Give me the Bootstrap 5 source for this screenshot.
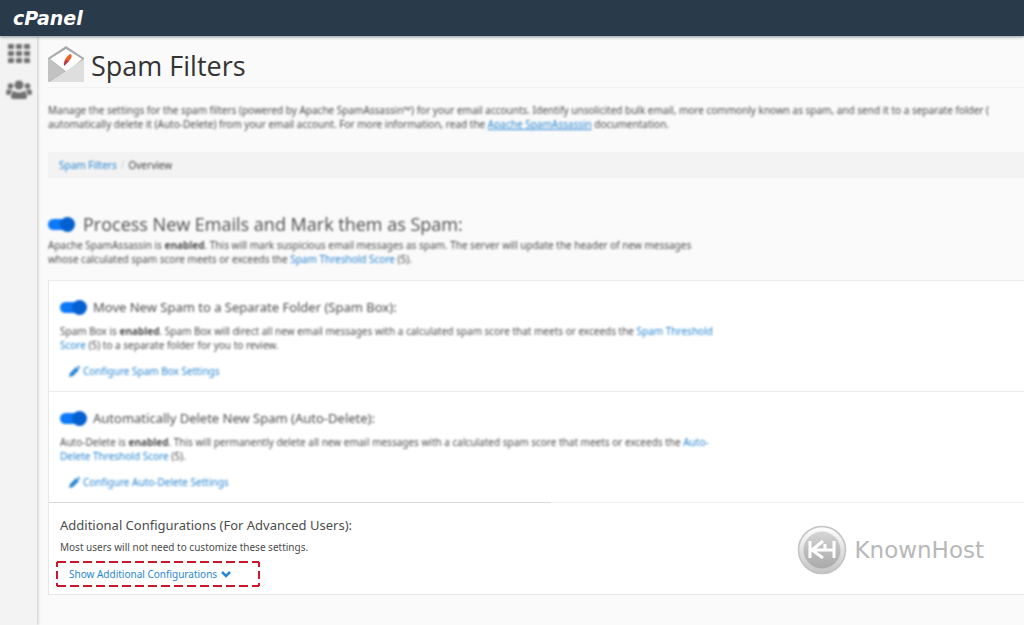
<!DOCTYPE html>
<html lang="en">
<head>
<meta charset="utf-8">
<meta name="viewport" content="width=device-width, initial-scale=1">
<title>cPanel - Spam Filters</title>
<link href="https://cdn.jsdelivr.net/npm/bootstrap@5.3.0/dist/css/bootstrap.min.css" rel="stylesheet">
<style>
  body { font-family: "Noto Sans", "Open Sans", sans-serif; font-size: 10px; line-height: 14px; color: #4c4c4c; background: #fafafa; overflow-x: hidden; }
  a { color: #2a86d1; text-decoration: none; }
  h1, h2, h3 { font-family: "Open Sans", sans-serif; font-weight: 400; margin: 0; }
  .topbar { background: #293a4a; height: 36px; box-shadow: 0 1px 3px #293a4a88; z-index: 2; }
  .brand-word { font: italic bold 19px/24px "DejaVu Sans", sans-serif; color: #fff; margin-left: 13px; }
  .side { width: 37px; flex: none; background: #f3f3f3; box-shadow: 1px 0 3px #0003; padding-top: 7px; gap: 16px; }
  .page { padding: 10px 0 30px 11px; }
  .title-row { gap: 7px; height: 42px; border-bottom: 1px solid #f2f2f2; }
  h1 { font-size: 27px; line-height: 40px; color: #333; }
  .intro { margin: 15px 0 21px; white-space: nowrap; }
  .intro a { text-decoration: underline; }
  .crumbs { --bs-breadcrumb-item-padding-x: 4px; background: #f3f3f3; padding: 6px 11px; margin: 0 0 34px; font-size: 10px; }
  .crumbs .breadcrumb-item + .breadcrumb-item::before { color: #ccc; }
  .crumbs .active { color: #444; }
  h2 { font-size: 18px; line-height: 24px; }
  h3 { font-family: "Noto Sans", sans-serif; font-size: 13px; line-height: 24px; }
  .soft { filter: blur(1px); }
  .toggle { appearance: none; position: relative; width: 27px; height: 15px; margin: 0; flex: none; }
  .toggle::before { content: ""; position: absolute; inset: 2px 2px 2px 0; border-radius: 6px; background: #0d78f8; }
  .toggle::after { content: ""; position: absolute; right: 0; width: 15px; height: 15px; border-radius: 50%; background: #0560cf; }
  .status { margin: 2px 0 14px; }
  .panel-item { border-top: 1px solid #ececec; border-left: 1px solid #e8e8e8; background: #fff; padding: 14px 11px 11px; }
  .panel-item h3, .panel-item .head { height: 24px; }
  .head { gap: 6px; }
  .panel-item p { margin: 5px 0 10px; }
  .act { height: 18px; margin-left: 9px; gap: 3px; }
  .advanced { border-top: 0; border-bottom: 1px solid #e6e6e6; padding: 11px 40px 7px 11px; background: linear-gradient(90deg, #d9d9d9 502px, #f0f0f0 502px) 0 0 / 100% 1px no-repeat #fff; }
  .advanced p { margin: 3px 0 7px; }
  .callout { position: relative; width: 204px; height: 26px; margin-left: -4px; padding-left: 13px; }
  .callout .dashes { position: absolute; inset: 0; pointer-events: none; }
  .host-word { font: 23px/26px "DejaVu Sans", sans-serif; color: #b8b8b8; }
</style>
</head>
<body>
<div class="d-flex flex-column min-vh-100">
  <header class="topbar d-flex align-items-center position-relative">
    <a href="#" class="brand-word">cPanel</a>
  </header>
  <div class="d-flex flex-grow-1">
    <nav class="side d-flex flex-column align-items-center" aria-label="Sections">
      <a href="#" aria-label="Home" class="soft d-flex"><svg width="22" height="20" viewBox="0 0 22 20" fill="#707070"><rect y="1" width="6" height="5" rx="1"/><rect x="8" y="1" width="6" height="5" rx="1"/><rect x="16" y="1" width="6" height="5" rx="1"/><rect y="8" width="6" height="5" rx="1"/><rect x="8" y="8" width="6" height="5" rx="1"/><rect x="16" y="8" width="6" height="5" rx="1"/><rect y="15" width="6" height="5" rx="1"/><rect x="8" y="15" width="6" height="5" rx="1"/><rect x="16" y="15" width="6" height="5" rx="1"/></svg></a>
      <a href="#" aria-label="Users" class="soft d-flex"><svg width="26" height="22" viewBox="0 0 26 22" fill="#707070"><circle cx="13" cy="6" r="4.500"/><circle cx="4.500" cy="7" r="2.800"/><circle cx="21.500" cy="7" r="2.800"/><path d="M8 12q5 3 10 0q3 1 3 6q0 2-2 2H7q-2 0-2-2q0-5 3-6zM2 10q2 1.500 5 1q-3 2-3 5H2q-2 0-2-2q0-3 2-4zM24 10q-2 1.500-5 1q3 2 3 5h2q2 0 2-2q0-3-2-4z"/></svg></a>
    </nav>
    <main class="page flex-grow-1">
      <div class="title-row d-flex align-items-start">
        <svg width="36" height="36" viewBox="0 0 36 36" aria-hidden="true"><path d="M0 12L18 0l18 12v22q0 2-2 2H2q-2 0-2-2z" fill="#aaa"/><path d="M2 13L18 3l16 10-15 13z" fill="#fff"/><path d="M0 12l17 13L0 36z" fill="#c2c2c2"/><path d="M36 13L1 36h33q2 0 2-2z" fill="#dedede"/><path d="M23 8q2 3-2 7l-5 5q-1-4 2-8t5-4z" fill="#e8632a"/><path d="M16 20q0-4 2-6l3 1z" fill="#a83c5c"/></svg>
        <h1>Spam Filters</h1>
      </div>
      <p class="intro soft">Manage the settings for the spam filters (powered by Apache SpamAssassin™) for your email accounts. Identify unsolicited bulk email, more commonly known as spam, and send it to a separate folder (<br>automatically delete it (Auto-Delete) from your email account. For more information, read the <a href="#">Apache SpamAssassin</a> documentation.</p>
      <ol class="breadcrumb crumbs"><li class="breadcrumb-item soft"><a href="#">Spam Filters</a></li><li class="breadcrumb-item active soft">Overview</li></ol>
      <div class="d-flex align-items-center soft">
        <input class="toggle" type="checkbox" role="switch" id="process" checked>
        <h2 class="ms-2"><label for="process">Process New Emails and Mark them as Spam:</label></h2>
      </div>
      <p class="soft status">Apache SpamAssassin is <strong>enabled</strong>. This will mark suspicious email messages as spam. The server will update the header of new messages<br>whose calculated spam score meets or exceeds the <a href="#">Spam Threshold Score</a> (5).</p>
      <div>
        <section class="panel-item">
          <div class="soft">
            <div class="head d-flex align-items-center">
              <input class="toggle" type="checkbox" role="switch" id="box" checked>
              <h3><label for="box">Move New Spam to a Separate Folder (Spam Box):</label></h3>
            </div>
            <p>Spam Box is <strong>enabled</strong>. Spam Box will direct all new email messages with a calculated spam score that meets or exceeds the <a href="#">Spam Threshold<br>Score</a> (5) to a separate folder for you to review.</p>
            <a href="#" class="act d-flex align-items-center"><svg width="11" height="11" viewBox="0 0 11 11" fill="currentColor"><path d="M0 11l1-4 6-6 3 3-6 6zM8 0q1-1 2 0l1 1q0 1-1 2z"/></svg>Configure Spam Box Settings</a>
          </div>
        </section>
        <section class="panel-item">
          <div class="soft">
            <div class="head d-flex align-items-center">
              <input class="toggle" type="checkbox" role="switch" id="auto" checked>
              <h3><label for="auto">Automatically Delete New Spam (Auto-Delete):</label></h3>
            </div>
            <p>Auto-Delete is <strong>enabled</strong>. This will permanently delete all new email messages with a calculated spam score that meets or exceeds the <a href="#">Auto-<br>Delete Threshold Score</a> (5).</p>
            <a href="#" class="act d-flex align-items-center"><svg width="11" height="11" viewBox="0 0 11 11" fill="currentColor"><path d="M0 11l1-4 6-6 3 3-6 6zM8 0q1-1 2 0l1 1q0 1-1 2z"/></svg>Configure Auto-Delete Settings</a>
          </div>
        </section>
        <section class="panel-item advanced d-flex justify-content-between align-items-center">
          <div>
            <h3>Additional Configurations (For Advanced Users):</h3>
            <p>Most users will not need to customize these settings.</p>
            <div class="callout d-flex align-items-center">
              <a href="#" class="d-flex align-items-center gap-1">Show Additional Configurations <svg width="10" height="7" viewBox="0 0 10 7" fill="none" stroke="currentColor" stroke-width="2.500"><path d="M1 1l4 4 4-4"/></svg></a>
              <svg class="dashes" width="204" height="26" fill="none" stroke="#c9182b" stroke-width="2"><path d="M1 1H203M1 25H203" stroke-dasharray="9 4"/><path d="M1 1V25M203 1V25" stroke-dasharray="5 4 8 4"/></svg>
            </div>
          </div>
          <div class="d-flex align-items-center gap-2">
            <svg width="50" height="50" viewBox="0 0 50 50" aria-hidden="true"><defs><linearGradient id="ring" x2="0" y2="1"><stop stop-color="#fff"/><stop offset="1" stop-color="#c4c4c4"/></linearGradient><linearGradient id="disc" x2="0" y2="1"><stop stop-color="#d6d6d6"/><stop offset=".5" stop-color="#bdbdbd"/><stop offset="1" stop-color="#aaa"/></linearGradient></defs><circle cx="25" cy="25" r="23.500" fill="url(#ring)" stroke="#c2c2c2" stroke-width="1.500"/><circle cx="25" cy="25" r="18.500" fill="url(#disc)"/><path d="M13 16v17M26 16L15 25l11 8M18 25h19M28 19v6M37 16v17" fill="none" stroke="#fff" stroke-width="3"/></svg>
            <span class="host-word">KnownHost</span>
          </div>
        </section>
      </div>
    </main>
  </div>
</div>
<script src="https://cdn.jsdelivr.net/npm/bootstrap@5.3.0/dist/js/bootstrap.bundle.min.js"></script>
</body>
</html>
